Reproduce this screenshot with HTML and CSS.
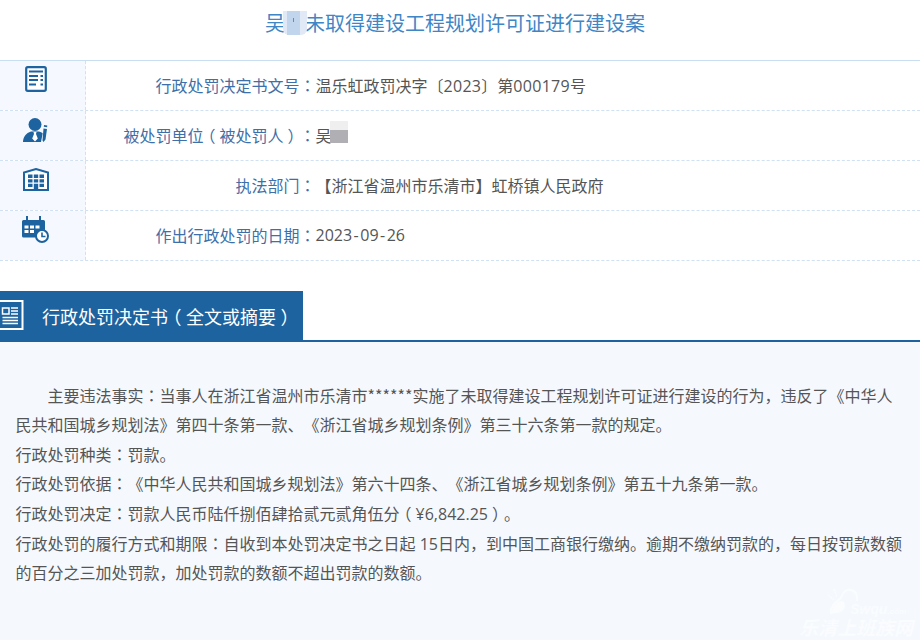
FILE: index.html
```html
<!DOCTYPE html>
<html lang="zh-CN">
<head>
<meta charset="utf-8">
<title>吴某未取得建设工程规划许可证进行建设案</title>
<link rel="stylesheet" href="styles.css">
</head>
<body>
<h1 class="title"><span class="title-text">吴<span class="blur-gap"><span class="blur-title"></span></span>未取得建设工程规划许可证进行建设案</span></h1>
<div class="info">
  <div class="row">
    <div class="ico"><svg width="22" height="26" viewBox="0 0 22 26"><rect x="1.200" y="1.200" width="19.600" height="23.600" rx="1.500" fill="#fff" stroke="#1d639f" stroke-width="2.200"/><path d="M4 5.500h14M4 10h9M15.500 10h2.500M4 14h9M15.500 14h2.500M4 18.500h7M15.500 18.500h2.500" stroke="#1d639f" stroke-width="2" fill="none"/></svg></div>
    <div class="cell"><span class="label">行政处罚决定书文号<span class="p" lang="zh-TW">：</span></span><span class="value">温乐虹政罚决字〔<span class="num">2023</span>〕第<span class="num">000179</span>号</span></div>
  </div>
  <div class="row">
    <div class="ico ico-low"><svg width="25" height="25" viewBox="0 0 25 25"><circle cx="12" cy="6.500" r="6.500" fill="#1d639f"/><path d="M0 24c0-5 3-9 8-10.500h8c1.500.4 2.800 1 3.700 1.800L18 24z" fill="#1d639f"/><path d="M10.500 14h3l-.5 2 1.800 4.500-2.800 3-2.800-3 1.800-4.500z" fill="#fff"/><path d="M19.500 22.500l1-12 3.500.5-1.500 10.500-2 2.500zM20.800 8.800l.2-1.800 3.300.4-.2 1.800z" fill="#1d639f"/></svg></div>
    <div class="cell"><span class="label">被处罚单位<span class="pl">（</span>被处罚人<span class="pr">）</span><span class="p" lang="zh-TW">：</span></span><span class="value">吴<span class="blur-person"></span></span></div>
  </div>
  <div class="row">
    <div class="ico ico-low"><svg width="26" height="23" viewBox="0 0 26 23"><path d="M1 22V4.500L13 1l12 3.500V22z" fill="#fff" stroke="#1d639f" stroke-width="2"/><path d="M5 6.500h4.500v3.500H5zM10.800 6.500h4.400v3.500h-4.400zM16.500 6.500H21v3.500h-4.500zM5 11.200h4.500v3.300H5zM10.800 11.200h4.400v3.300h-4.400zM16.500 11.200H21v3.300h-4.500zM5 15.800h4.500v3.200H5zM16.500 15.800H21v3.200h-4.500zM10.800 15.800h4.400V22h-4.400z" fill="#1d639f"/></svg></div>
    <div class="cell"><span class="label">执法部门<span class="p" lang="zh-TW">：</span></span><span class="value">【浙江省温州市乐清市】虹桥镇人民政府</span></div>
  </div>
  <div class="row">
    <div class="ico"><svg width="27" height="27" viewBox="0 0 27 27"><path d="M1.500 4h20a1.500 1.500 0 0 1 1.500 1.500V14a7 7 0 0 0-8.500 7.500h-13A1.500 1.500 0 0 1 0 20V5.500A1.500 1.500 0 0 1 1.500 4z" fill="#1d639f"/><path d="M4 0h2v6H4zM17 0h2v6h-2z" fill="#1d639f"/><path d="M2.500 9.500h4v3h-4zM8 9.500h4v3H8zM13.500 9.500h4v3h-4zM2.500 14h4v3h-4zM8 14h4v3H8z" fill="#fff"/><circle cx="20" cy="20" r="6" fill="#fff" stroke="#1d639f" stroke-width="2"/><path d="M20 16.500V20.500h3.500" fill="none" stroke="#1d639f" stroke-width="1.600"/></svg></div>
    <div class="cell"><span class="label">作出行政处罚的日期<span class="p" lang="zh-TW">：</span></span><span class="value">2023<span class="hy">-</span>09<span class="hy">-</span>26</span></div>
  </div>
</div>
<div class="section-head">
  <div class="tab">
    <svg class="tab-ico" width="24" height="30" viewBox="0 0 24 30"><path d="M0 1h22.500v28H0" fill="none" stroke="#fff" stroke-width="2"/><path d="M2.500 8h6.500v6H2.500z" fill="none" stroke="#fff" stroke-width="1.500"/><path d="M11 8h7M11 11h7M11 14h7M2.500 17.500h15.500M2.500 20.500h15.500M2.500 23.500h15.500" stroke="#fff" stroke-width="1.500"/></svg>
    <span class="tab-text">行政处罚决定书<span class="pl">（</span>全文或摘要<span class="pr">）</span></span>
  </div>
</div>
<div class="content">
  <p class="first">主要违法事实<span class="p" lang="zh-TW">：</span>当事人在浙江省温州市乐清市<span class="star">******</span>实施了未取得建设工程规划许可证进行建设的行为，违反了《中华人民共和国城乡规划法》第四十条第一款、《浙江省城乡规划条例》第三十六条第一款的规定。</p>
  <p>行政处罚种类<span class="p" lang="zh-TW">：</span>罚款。</p>
  <p>行政处罚依据<span class="p" lang="zh-TW">：</span>《中华人民共和国城乡规划法》第六十四条、《浙江省城乡规划条例》第五十九条第一款。</p>
  <p>行政处罚决定<span class="p" lang="zh-TW">：</span>罚款人民币陆仟捌佰肆拾贰元贰角伍分<span class="pl">（</span>¥6,842.25<span class="pr">）</span>。</p>
  <p>行政处罚的履行方式和期限<span class="p" lang="zh-TW">：</span>自收到本处罚决定书之日起 15日内，到中国工商银行缴纳。逾期不缴纳罚款的，每日按罚款数额的百分之三加处罚款，加处罚款的数额不超出罚款的数额。</p>
  <div class="watermark">
    <svg class="wm-logo" width="68" height="28" viewBox="0 0 68 28"><path d="M5 26c-3-2 0-9 4-12 2-2 5-3 6-6 1-4 5-7 9-6 5 1 7 6 6 11" fill="none" stroke="#fff" stroke-width="2"/><path d="M4 25c4 1 10 0 13-4 2-3 1-7-2-8-4-1-10 6-11 12z" fill="#fff"/><path d="M1 7l6 5M7 1l3 8" stroke="#fff" stroke-width="1.500" stroke-dasharray="2 1"/></svg>
    <span class="wm-site">Swqu<small>.com</small></span>
    <div class="wm-name">乐清上班族网</div>
  </div>
</div>
</body>
</html>
```
FILE: styles.css
```css
* { box-sizing: border-box; }
html, body { margin: 0; padding: 0; }
body {
  width: 920px;
  height: 640px;
  overflow: hidden;
  background: #fff;
  font-family: "Open Sans", "Noto Sans CJK SC", sans-serif;
  font-size: 16px;
  font-weight: 400;
  color: #555;
  text-spacing-trim: space-all;
  text-autospace: no-autospace;
  font-feature-settings: "chws" 0, "palt" 0;
}
.p { font-family: "Noto Sans CJK TC", sans-serif; }
.pl, .pr { display: inline-block; }
.pl { transform: translateX(-.25em); }
.pr { transform: translateX(.25em); }
.star { font-family: "Noto Sans CJK SC", sans-serif; }
.num { letter-spacing: .3px; }
.hy { margin: 0 1.500px; }
.title {
  margin: 0;
  height: 60px;
  padding: 9px 10px 0 0;
  text-align: center;
  font-size: 20px;
  line-height: 30px;
  font-weight: 400;
  color: #3f86c6;
}
.blur-gap {
  position: relative;
  display: inline-block;
  width: 20px;
  height: 20px;
}
.blur-title {
  position: absolute;
  left: -2px;
  top: 0;
  width: 24px;
  height: 24px;
  background: #e0e9f5;
  border-radius: 0 0 6px 6px;
}
.blur-title::after {
  content: "";
  position: absolute;
  left: 4px;
  top: 0;
  width: 13px;
  height: 24px;
  background: linear-gradient(#5b8ccb, #5b8ccb) 6px 7px / 1px 4px no-repeat, #c1d5ec;
}
.info { border-top: 1px solid #c9def0; }
.row {
  display: flex;
  height: 50px;
  border-bottom: 1px dashed #cfe1f3;
}
.ico {
  width: 86px;
  flex: none;
  background: #f5f9ff;
  border-right: 1px dashed #cfe1f3;
  padding: 5px 14px 0 0;
  display: flex;
  justify-content: center;
  align-items: flex-start;
}
.ico-low { padding-top: 7px; }
.cell {
  display: flex;
  align-items: center;
  padding-bottom: 1px;
}
.label {
  width: 229.500px;
  text-align: right;
  color: #3f6fa8;
}
.value { position: relative; color: #555; }
.blur-person {
  position: absolute;
  left: 14px;
  top: -2px;
  width: 18px;
  height: 22px;
  background: linear-gradient(#efefef 0 9px, #b0b0b4 9px);
}
.section-head {
  margin-top: 30px;
  border-bottom: 2px solid #1d639f;
}
.tab {
  width: 303px;
  height: 49px;
  background: #1d639f;
  display: flex;
  align-items: center;
  position: relative;
  padding-left: 42px;
}
.tab-ico { position: absolute; left: 0; top: 9px; }
.tab-text { color: #fff; font-size: 18px; font-weight: 400; }
.content {
  position: relative;
  height: 299px;
  background: #f5f9fe;
  padding: 39px 16px 0 15.500px;
  line-height: 28.800px;
}
.content p { margin: 0; }
.content .first { text-indent: 32px; }
.watermark {
  position: absolute;
  right: 5px;
  bottom: 4px;
  width: 116px;
  height: 54px;
  color: #fff;
  opacity: .55;
}
.wm-logo { position: absolute; left: 28px; top: 5px; }
.wm-site {
  position: absolute;
  left: 51px;
  top: 16px;
  font: italic 700 14px/20px "Liberation Sans", sans-serif;
}
.wm-site small { font-size: 8px; }
.wm-name {
  position: absolute;
  left: 0;
  bottom: 0;
  font-family: "Noto Sans CJK SC", sans-serif;
  font-size: 19px;
  line-height: 20px;
  font-style: italic;
  font-weight: 700;
  white-space: nowrap;
}
```
